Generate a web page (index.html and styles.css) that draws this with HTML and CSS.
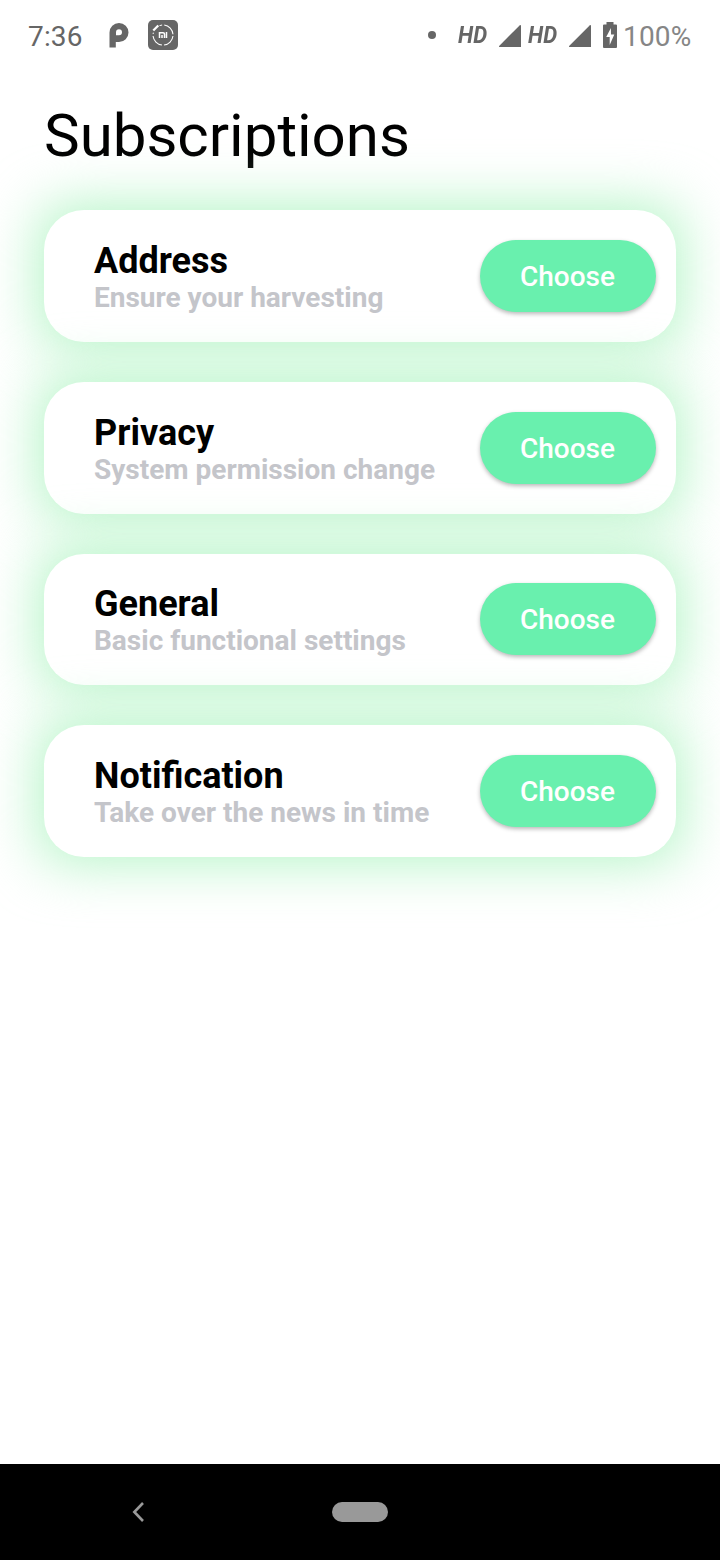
FILE: index.html
```html
<!DOCTYPE html>
<html lang="en">
<head>
<meta charset="utf-8">
<title>Subscriptions</title>
<link rel="stylesheet" href="styles.css">
</head>
<body>
<div class="screen">
  <header class="status">
    <span class="clock">7:36</span>
    <svg class="icon-p" width="20" height="26" viewBox="0 0 20 26"><path fill="#666" fill-rule="evenodd" d="M.5 25.500V10.500a9.500 9.500 0 1 1 9.500 9.500H6.800V25.500zM7 13.200h3a3 3 0 1 0-3-3z"/></svg>
    <svg class="icon-mi" width="30" height="30" viewBox="0 0 30 30"><rect width="30" height="30" rx="5" fill="#666"/><circle cx="15" cy="15" r="10" fill="none" stroke="#fff" stroke-width="1.100" stroke-dasharray="13.500 2.200" stroke-dashoffset="-1"/><path d="M4 11l7-6" stroke="#666" stroke-width="5"/><path d="M5.300 10.500l5-5" stroke="#fff" stroke-width="2.200"/><path d="M11.500 18v-5.300h3.500q1.500 0 1.500 1.500V18M14 18v-3M18.500 12V18" fill="none" stroke="#fff" stroke-width="1.500"/></svg>
    <span class="dot"></span>
    <span class="hd">HD</span>
    <svg class="signal" width="22" height="22" viewBox="0 0 22 22"><path fill="#666" d="M.6 22Q-.5 22 .4 20.700L20.600.4Q22-.5 22 1V22z"/></svg>
    <span class="hd hd-second">HD</span>
    <svg class="signal" width="22" height="22" viewBox="0 0 22 22"><path fill="#666" d="M.6 22Q-.5 22 .4 20.700L20.600.4Q22-.5 22 1V22z"/></svg>
    <svg class="battery" width="14" height="26" viewBox="0 0 14 26"><path fill="#666" d="M3.500 0h7v2.600H13q1 0 1 1V25q0 1-1 1H1q-1 0-1-1V3.600q0-1 1-1h2.500z"/><path fill="#fff" d="M7.900 6L3.200 15h3.500v8L11.300 12.500H8z"/></svg>
    <span class="percent">100%</span>
  </header>
  <main class="content">
    <h1 class="title">Subscriptions</h1>
    <section class="cards">
      <div class="glow"><article class="card">
        <div class="text"><h2 class="name">Address</h2><p class="desc">Ensure your harvesting</p></div>
        <button class="choose">Choose</button>
      </article></div>
      <div class="glow"><article class="card">
        <div class="text"><h2 class="name">Privacy</h2><p class="desc">System permission change</p></div>
        <button class="choose">Choose</button>
      </article></div>
      <div class="glow"><article class="card">
        <div class="text"><h2 class="name">General</h2><p class="desc">Basic functional settings</p></div>
        <button class="choose">Choose</button>
      </article></div>
      <div class="glow"><article class="card">
        <div class="text"><h2 class="name">Notification</h2><p class="desc">Take over the news in time</p></div>
        <button class="choose">Choose</button>
      </article></div>
    </section>
  </main>
  <nav class="navbar">
    <svg class="back" width="12" height="20" viewBox="0 0 12 20"><path d="M11 1L2.300 10l8.700 9" fill="none" stroke="#999" stroke-width="2.600"/></svg>
    <span class="home"></span>
  </nav>
</div>
</body>
</html>
```
FILE: styles.css
```css
* { box-sizing: border-box; margin: 0; padding: 0; }
body { background: #fff; font-family: Roboto, sans-serif; }
.screen { width: 720px; height: 1560px; display: flex; flex-direction: column; overflow: hidden; }
.status { height: 72px; display: flex; align-items: center; padding: 0 28px 2px 28px; color: #666; }
.clock { font-size: 28px; width: 81px; padding-top: 2px; letter-spacing: .15px; }
.icon-p { margin-right: 19px; }
.dot { width: 8px; height: 8px; border-radius: 50%; background: #666; margin-left: 250px; }
.hd { width: 41px; margin-left: 22px; font: italic 700 24px Roboto, sans-serif; transform: scaleX(.92); transform-origin: left; }
.hd-second { margin-left: 7px; }
.signal { margin-top: 2px; }
.battery { margin-left: 12px; }
.percent { font-size: 28px; color: #868686; margin-left: 6px; padding-top: 2px; letter-spacing: .15px; }
.content { flex: 1; padding: 29px 44px 0; }
.title { font-size: 60px; font-weight: 400; line-height: 70px; height: 109px; color: #000; }
.cards { display: flex; flex-direction: column; gap: 40px; }
.glow { position: relative; isolation: isolate; }
/* soft halo behind each card, squarer than the card so the corners stay tinted */
.glow::before { content: ""; position: absolute; inset: -4px; z-index: -1; border-radius: 22px; background: #b0f4c3; filter: blur(28px); }
.card { height: 131.750px; border-radius: 40px; background: #fff; display: flex; align-items: center; justify-content: space-between; padding: 0 20px 0 50px; }
.text { padding-top: 2px; }
.name { font-size: 36px; line-height: 42px; height: 41px; color: #000; }
.desc { font-size: 28px; font-weight: 700; line-height: 33px; color: #c4c5ca; }
.choose { width: 176px; height: 72px; border: 0; border-radius: 36px; background: #69f0ae; color: #fff; font: 500 28px Roboto, sans-serif; padding: 1px 1px 0 0; box-shadow: 0 2px 4px rgba(0,0,0,.28); }
.navbar { height: 96px; background: #000; display: flex; align-items: center; padding-left: 132px; }
.home { width: 56px; height: 20px; border-radius: 10px; background: #999; margin-left: 188px; }
```
